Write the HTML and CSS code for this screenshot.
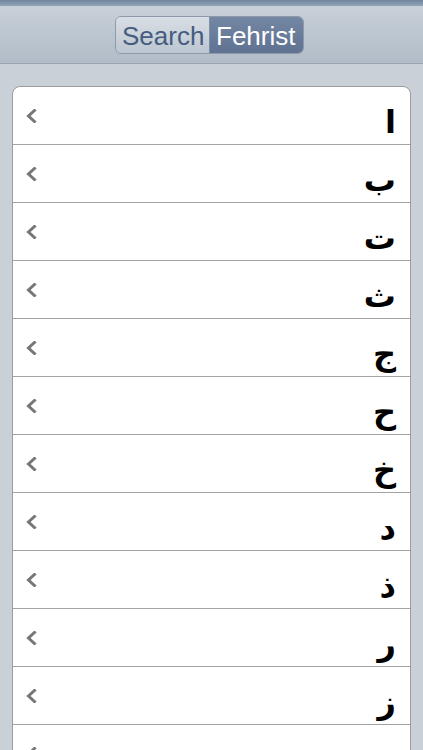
FILE: index.html
```html
<!DOCTYPE html>
<html lang="en">
<head>
<meta charset="utf-8">
<title>Fehrist</title>
<link rel="stylesheet" href="styles.css">
</head>
<body>
<div class="topstrip"></div>
<header class="navbar">
  <div class="segmented">
    <div class="seg seg-off">Search</div>
    <div class="seg seg-on">Fehrist</div>
  </div>
</header>
<main class="content">
  <ul class="list">
    <li class="row"><svg class="chev" viewBox="0 0 11 14"><polyline points="8.5,1.5 2.5,7 8.5,12.5"/></svg><span class="letter">ا</span></li>
    <li class="row"><svg class="chev" viewBox="0 0 11 14"><polyline points="8.5,1.5 2.5,7 8.5,12.5"/></svg><span class="letter">ب</span></li>
    <li class="row"><svg class="chev" viewBox="0 0 11 14"><polyline points="8.5,1.5 2.5,7 8.5,12.5"/></svg><span class="letter">ت</span></li>
    <li class="row"><svg class="chev" viewBox="0 0 11 14"><polyline points="8.5,1.5 2.5,7 8.5,12.5"/></svg><span class="letter">ث</span></li>
    <li class="row"><svg class="chev" viewBox="0 0 11 14"><polyline points="8.5,1.5 2.5,7 8.5,12.5"/></svg><span class="letter">ج</span></li>
    <li class="row"><svg class="chev" viewBox="0 0 11 14"><polyline points="8.5,1.5 2.5,7 8.5,12.5"/></svg><span class="letter">ح</span></li>
    <li class="row"><svg class="chev" viewBox="0 0 11 14"><polyline points="8.5,1.5 2.5,7 8.5,12.5"/></svg><span class="letter">خ</span></li>
    <li class="row"><svg class="chev" viewBox="0 0 11 14"><polyline points="8.5,1.5 2.5,7 8.5,12.5"/></svg><span class="letter">د</span></li>
    <li class="row"><svg class="chev" viewBox="0 0 11 14"><polyline points="8.5,1.5 2.5,7 8.5,12.5"/></svg><span class="letter">ذ</span></li>
    <li class="row"><svg class="chev" viewBox="0 0 11 14"><polyline points="8.5,1.5 2.5,7 8.5,12.5"/></svg><span class="letter">ر</span></li>
    <li class="row"><svg class="chev" viewBox="0 0 11 14"><polyline points="8.5,1.5 2.5,7 8.5,12.5"/></svg><span class="letter">ز</span></li>
    <li class="row"><svg class="chev" viewBox="0 0 11 14"><polyline points="8.5,1.5 2.5,7 8.5,12.5"/></svg><span class="letter">س</span></li>
  </ul>
</main>
</body>
</html>
```

FILE: styles.css
```css
html, body {
  margin: 0;
  padding: 0;
}
body {
  background: #c9d0d8;
  font-family: "Liberation Sans", Arial, sans-serif;
  height: 750px;
  overflow: hidden;
}
.topstrip {
  height: 6px;
  background: linear-gradient(#6f84a0, #94a4b8);
}
.navbar {
  height: 58px;
  background: linear-gradient(#c8d0d8, #b1bcc8);
  border-bottom: 1px solid #98a4b2;
  display: flex;
  justify-content: center;
  align-items: flex-start;
  box-sizing: border-box;
  padding-top: 10px;
}
.segmented {
  display: flex;
  height: 38px;
  border: 1px solid #8e9aa9;
  border-radius: 6px;
  overflow: hidden;
  box-sizing: border-box;
  margin-left: -4px;
}
.seg {
  font-size: 26px;
  line-height: 38px;
  white-space: nowrap;
}
.seg-off {
  width: 94px;
  box-sizing: border-box;
  background: linear-gradient(#d8dee5, #bcc6d1);
  color: #465c7e;
  border-right: 1px solid #7f8ea4;
  padding-left: 6px;
}
.seg-on {
  width: 93px;
  box-sizing: border-box;
  background: linear-gradient(#7386a2, #5f7292);
  color: #ffffff;
  padding-left: 6px;
}
.content {
  padding: 22px 12px 0 12px;
}
.list {
  list-style: none;
  margin: 0;
  padding: 0;
  background: #ffffff;
  border: 1px solid #9c9c9c;
  border-radius: 8px;
  overflow: hidden;
}
.row {
  height: 58px;
  box-sizing: border-box;
  border-bottom: 1px solid #a3a3a3;
  display: flex;
  justify-content: space-between;
  align-items: center;
  padding: 0 14px 0 13px;
}
.row:last-child {
  border-bottom: none;
}
.chev {
  width: 11px;
  height: 14px;
  fill: none;
  stroke: #777777;
  stroke-width: 3;
  stroke-linecap: square;
  stroke-linejoin: miter;
}
.letter {
  align-self: flex-end;
  font-family: "DejaVu Sans", sans-serif;
  font-weight: bold;
  font-size: 32px;
  line-height: 1;
  color: #000000;
  padding-bottom: 6px;
}
```
